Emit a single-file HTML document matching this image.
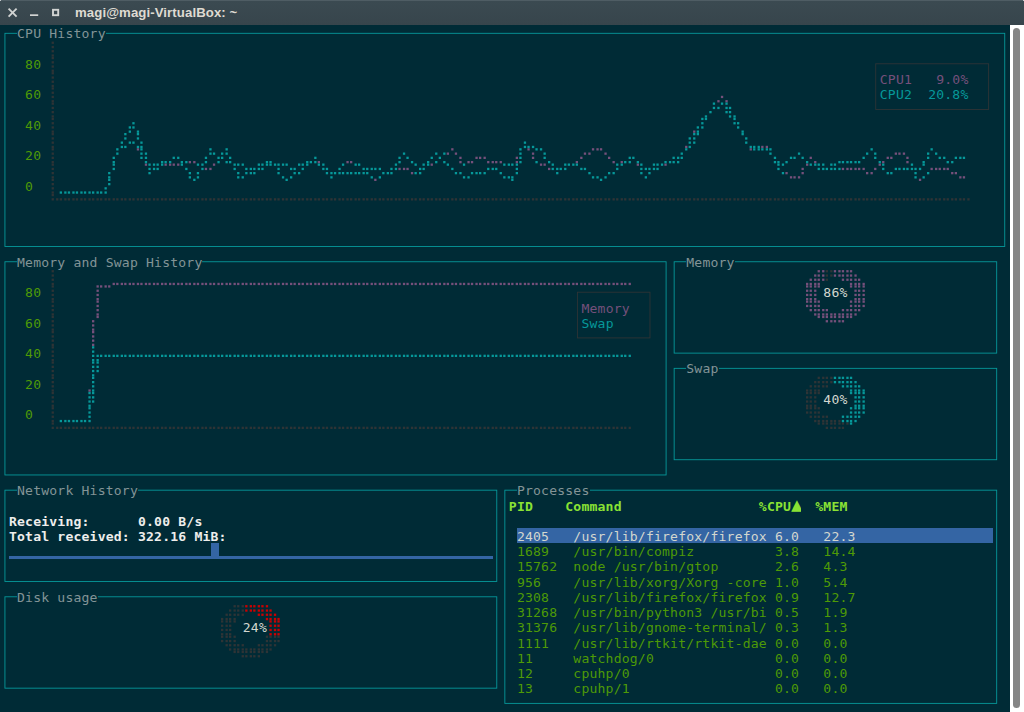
<!DOCTYPE html><html><head><meta charset="utf-8"><title>magi@magi-VirtualBox: ~</title><style>
html,body{margin:0;padding:0}
body{width:1024px;height:712px;overflow:hidden;background:#002b36;position:relative}
.tb{position:absolute;left:0;top:0;width:1024px;height:25px;background:linear-gradient(#3b4a51,#37454c);border-top:1px solid #4f5d64;box-sizing:border-box}
.tt{position:absolute;left:75px;top:3.7px;font:bold 13.2px "Liberation Sans","DejaVu Sans",sans-serif;color:#dfdbd2;white-space:pre;letter-spacing:0.09px}
.sb{position:absolute;left:1010px;top:25px;width:14px;height:687px;background:#fff}
.th{position:absolute;left:3px;top:3px;width:7px;height:680px;border-radius:3.5px;background:#858585}
.t{position:absolute;white-space:pre;font-family:"DejaVu Sans Mono","Liberation Mono",monospace;font-size:13.1px;line-height:15.229px;height:15.229px;letter-spacing:0.18px;color:#839496}
.tl{position:absolute;left:0;top:0;width:1009.0px;height:712.0px}
.b{font-weight:bold}
.l{background:#002b36}
svg{position:absolute;left:0;top:0}
.d rect{width:2.3px;height:2.3px}
</style></head><body>
<div class="tb"><svg width="70" height="25" viewBox="0 0 70 25" style="top:-1px"><g stroke="#d2d4d3" stroke-width="1.9" fill="none"><line x1="8.6" y1="8.6" x2="16.6" y2="16.6"/><line x1="16.6" y1="8.6" x2="8.6" y2="16.6"/><line x1="30" y1="15.15" x2="38.2" y2="15.15" stroke-width="1.7"/><rect x="53" y="9.8" width="5.2" height="5.4"/></g></svg><div class="tt">magi@magi-VirtualBox: ~</div></div>
<div style="position:absolute;left:0;top:0;width:1px;height:1px;background:#c5cacc"></div><div style="position:absolute;left:1023px;top:0;width:1px;height:1px;background:#c5cacc"></div>
<div class="sb"><div class="th"></div></div>
<svg width="1010" height="712" viewBox="0 0 1010 712"><g fill="none" stroke="#06989a" stroke-width="0.9"><rect x="4.93" y="33.31" width="999.81" height="213.21"/><rect x="4.93" y="261.75" width="661.17" height="213.21"/><rect x="674.16" y="261.75" width="322.52" height="91.37"/><rect x="674.16" y="368.35" width="322.52" height="91.37"/><rect x="4.93" y="490.18" width="491.84" height="91.37"/><rect x="4.93" y="596.79" width="491.84" height="91.37"/><rect x="504.84" y="490.18" width="491.84" height="213.21"/><rect x="875.74" y="63.77" width="112.88" height="45.69" stroke="#2e3436"/><rect x="577.40" y="292.21" width="72.57" height="45.69" stroke="#2e3436"/></g></svg>
<div style="position:absolute;left:8.96px;top:556.12px;width:483.78px;height:2.60px;background:#3465a4"></div>
<div style="position:absolute;left:210.54px;top:543.49px;width:8.06px;height:15.23px;background:#3465a4"></div>
<div class="t b" style="left:791.10px;top:495.10px;width:10.00px;height:20px;overflow:hidden;color:#8ae234;font-size:19.5px;line-height:20px;letter-spacing:0">▲</div>
<div style="position:absolute;left:516.93px;top:528.06px;width:475.72px;height:15.23px;background:#3465a4"></div>
<div class="tl"><div class="t l" style="left:17.03px;top:26.40px">CPU History</div>
<div class="t l" style="left:17.03px;top:254.83px">Memory and Swap History</div>
<div class="t l" style="left:686.25px;top:254.83px">Memory</div>
<div class="t l" style="left:686.25px;top:361.44px">Swap</div>
<div class="t l" style="left:17.03px;top:483.27px">Network History</div>
<div class="t l" style="left:17.03px;top:589.87px">Disk usage</div>
<div class="t l" style="left:516.93px;top:483.27px">Processes</div>
<div class="t" style="left:25.09px;top:56.86px;color:#4e9a06">80</div>
<div class="t" style="left:25.09px;top:285.29px;color:#4e9a06">80</div>
<div class="t" style="left:25.09px;top:87.32px;color:#4e9a06">60</div>
<div class="t" style="left:25.09px;top:315.75px;color:#4e9a06">60</div>
<div class="t" style="left:25.09px;top:117.77px;color:#4e9a06">40</div>
<div class="t" style="left:25.09px;top:346.21px;color:#4e9a06">40</div>
<div class="t" style="left:25.09px;top:148.23px;color:#4e9a06">20</div>
<div class="t" style="left:25.09px;top:376.67px;color:#4e9a06">20</div>
<div class="t" style="left:25.09px;top:178.69px;color:#4e9a06">0</div>
<div class="t" style="left:25.09px;top:407.12px;color:#4e9a06">0</div>
<div class="t" style="left:879.77px;top:72.09px;color:#75507b">CPU1   9.0%</div>
<div class="t" style="left:879.77px;top:87.32px;color:#06989a">CPU2  20.8%</div>
<div class="t" style="left:581.44px;top:300.52px;color:#75507b">Memory</div>
<div class="t" style="left:581.44px;top:315.75px;color:#06989a">Swap</div>
<div class="t" style="left:823.33px;top:285.29px;color:#d3d7cf">86%</div>
<div class="t" style="left:823.33px;top:391.90px;color:#d3d7cf">40%</div>
<div class="t" style="left:242.79px;top:620.33px;color:#d3d7cf">24%</div>
<div class="t b" style="left:8.96px;top:513.73px;color:#eeeeec">Receiving:      0.00 B/s</div>
<div class="t b" style="left:8.96px;top:528.96px;color:#eeeeec">Total received: 322.16 MiB:</div>
<div class="t b" style="left:508.87px;top:498.50px;color:#8ae234">PID    Command</div>
<div class="t b" style="left:758.82px;top:498.50px;color:#8ae234">%CPU</div>
<div class="t b" style="left:815.26px;top:498.50px;color:#8ae234">%MEM</div>
<div class="t" style="left:516.93px;top:528.96px;color:#d3d7cf">2405   /usr/lib/firefox/firefox 6.0   22.3</div>
<div class="t" style="left:516.93px;top:544.19px;color:#4e9a06">1689   /usr/bin/compiz          3.8   14.4</div>
<div class="t" style="left:516.93px;top:559.42px;color:#4e9a06">15762  node /usr/bin/gtop       2.6   4.3</div>
<div class="t" style="left:516.93px;top:574.64px;color:#4e9a06">956    /usr/lib/xorg/Xorg -core 1.0   5.4</div>
<div class="t" style="left:516.93px;top:589.87px;color:#4e9a06">2308   /usr/lib/firefox/firefox 0.9   12.7</div>
<div class="t" style="left:516.93px;top:605.10px;color:#4e9a06">31268  /usr/bin/python3 /usr/bi 0.5   1.9</div>
<div class="t" style="left:516.93px;top:620.33px;color:#4e9a06">31376  /usr/lib/gnome-terminal/ 0.3   1.3</div>
<div class="t" style="left:516.93px;top:635.56px;color:#4e9a06">1111   /usr/lib/rtkit/rtkit-dae 0.0   0.0</div>
<div class="t" style="left:516.93px;top:650.79px;color:#4e9a06">11     watchdog/0               0.0   0.0</div>
<div class="t" style="left:516.93px;top:666.02px;color:#4e9a06">12     cpuhp/0                  0.0   0.0</div>
<div class="t" style="left:516.93px;top:681.25px;color:#4e9a06">13     cpuhp/1                  0.0   0.0</div></div>
<svg class="d" width="1009" height="712" viewBox="0 0 1009 712">
<g fill="#2e3436">
<rect x="51.6" y="41.6"/><rect x="51.6" y="45.9"/><rect x="51.6" y="50.1"/><rect x="51.6" y="54.4"/><rect x="51.6" y="56.9"/><rect x="51.6" y="61.2"/><rect x="51.6" y="65.4"/><rect x="51.6" y="69.6"/><rect x="51.6" y="72.1"/><rect x="51.6" y="76.4"/><rect x="51.6" y="80.6"/><rect x="51.6" y="84.8"/><rect x="51.6" y="87.3"/><rect x="51.6" y="91.6"/><rect x="51.6" y="95.8"/><rect x="51.6" y="100.1"/><rect x="51.6" y="102.5"/><rect x="51.6" y="106.8"/><rect x="51.6" y="111.0"/><rect x="51.6" y="115.3"/><rect x="51.6" y="117.8"/><rect x="51.6" y="122.1"/><rect x="51.6" y="126.3"/><rect x="51.6" y="130.5"/><rect x="51.6" y="133.0"/><rect x="51.6" y="137.3"/><rect x="51.6" y="141.5"/><rect x="51.6" y="145.8"/><rect x="51.6" y="148.2"/><rect x="51.6" y="152.5"/><rect x="51.6" y="156.7"/><rect x="51.6" y="161.0"/><rect x="51.6" y="163.5"/><rect x="51.6" y="167.8"/><rect x="51.6" y="172.0"/><rect x="51.6" y="176.2"/><rect x="51.6" y="178.7"/><rect x="51.6" y="183.0"/><rect x="51.6" y="187.2"/><rect x="51.6" y="191.4"/><rect x="51.6" y="193.9"/><rect x="51.6" y="198.2"/><rect x="56.1" y="198.2"/><rect x="59.7" y="198.2"/><rect x="64.2" y="198.2"/><rect x="67.8" y="198.2"/><rect x="72.3" y="198.2"/><rect x="75.8" y="198.2"/><rect x="80.3" y="198.2"/><rect x="83.9" y="198.2"/><rect x="88.4" y="198.2"/><rect x="92.0" y="198.2"/><rect x="96.5" y="198.2"/><rect x="100.0" y="198.2"/><rect x="104.5" y="198.2"/><rect x="108.1" y="198.2"/><rect x="112.6" y="198.2"/><rect x="116.2" y="198.2"/><rect x="120.7" y="198.2"/><rect x="124.2" y="198.2"/><rect x="128.7" y="198.2"/><rect x="132.3" y="198.2"/><rect x="136.8" y="198.2"/><rect x="140.3" y="198.2"/><rect x="144.8" y="198.2"/><rect x="148.4" y="198.2"/><rect x="152.9" y="198.2"/><rect x="156.5" y="198.2"/><rect x="161.0" y="198.2"/><rect x="164.5" y="198.2"/><rect x="169.0" y="198.2"/><rect x="172.6" y="198.2"/><rect x="177.1" y="198.2"/><rect x="180.7" y="198.2"/><rect x="185.2" y="198.2"/><rect x="188.7" y="198.2"/><rect x="193.2" y="198.2"/><rect x="196.8" y="198.2"/><rect x="201.3" y="198.2"/><rect x="204.8" y="198.2"/><rect x="209.3" y="198.2"/><rect x="212.9" y="198.2"/><rect x="217.4" y="198.2"/><rect x="221.0" y="198.2"/><rect x="225.5" y="198.2"/><rect x="229.0" y="198.2"/><rect x="233.5" y="198.2"/><rect x="237.1" y="198.2"/><rect x="241.6" y="198.2"/><rect x="245.2" y="198.2"/><rect x="249.7" y="198.2"/><rect x="253.2" y="198.2"/><rect x="257.7" y="198.2"/><rect x="261.3" y="198.2"/><rect x="265.8" y="198.2"/><rect x="269.4" y="198.2"/><rect x="273.9" y="198.2"/><rect x="277.4" y="198.2"/><rect x="281.9" y="198.2"/><rect x="285.5" y="198.2"/><rect x="290.0" y="198.2"/><rect x="293.5" y="198.2"/><rect x="298.0" y="198.2"/><rect x="301.6" y="198.2"/><rect x="306.1" y="198.2"/><rect x="309.7" y="198.2"/><rect x="314.2" y="198.2"/><rect x="317.7" y="198.2"/><rect x="322.2" y="198.2"/><rect x="325.8" y="198.2"/><rect x="330.3" y="198.2"/><rect x="333.9" y="198.2"/><rect x="338.4" y="198.2"/><rect x="341.9" y="198.2"/><rect x="346.4" y="198.2"/><rect x="350.0" y="198.2"/><rect x="354.5" y="198.2"/><rect x="358.0" y="198.2"/><rect x="362.5" y="198.2"/><rect x="366.1" y="198.2"/><rect x="370.6" y="198.2"/><rect x="374.2" y="198.2"/><rect x="378.7" y="198.2"/><rect x="382.2" y="198.2"/><rect x="386.7" y="198.2"/><rect x="390.3" y="198.2"/><rect x="394.8" y="198.2"/><rect x="398.4" y="198.2"/><rect x="402.9" y="198.2"/><rect x="406.4" y="198.2"/><rect x="410.9" y="198.2"/><rect x="414.5" y="198.2"/><rect x="419.0" y="198.2"/><rect x="422.5" y="198.2"/><rect x="427.0" y="198.2"/><rect x="430.6" y="198.2"/><rect x="435.1" y="198.2"/><rect x="438.7" y="198.2"/><rect x="443.2" y="198.2"/><rect x="446.7" y="198.2"/><rect x="451.2" y="198.2"/><rect x="454.8" y="198.2"/><rect x="459.3" y="198.2"/><rect x="462.9" y="198.2"/><rect x="467.4" y="198.2"/><rect x="470.9" y="198.2"/><rect x="475.4" y="198.2"/><rect x="479.0" y="198.2"/><rect x="483.5" y="198.2"/><rect x="487.1" y="198.2"/><rect x="491.6" y="198.2"/><rect x="495.1" y="198.2"/><rect x="499.6" y="198.2"/><rect x="503.2" y="198.2"/><rect x="507.7" y="198.2"/><rect x="511.2" y="198.2"/><rect x="515.7" y="198.2"/><rect x="519.3" y="198.2"/><rect x="523.8" y="198.2"/><rect x="527.4" y="198.2"/><rect x="531.9" y="198.2"/><rect x="535.4" y="198.2"/><rect x="539.9" y="198.2"/><rect x="543.5" y="198.2"/><rect x="548.0" y="198.2"/><rect x="551.6" y="198.2"/><rect x="556.1" y="198.2"/><rect x="559.6" y="198.2"/><rect x="564.1" y="198.2"/><rect x="567.7" y="198.2"/><rect x="572.2" y="198.2"/><rect x="575.7" y="198.2"/><rect x="580.2" y="198.2"/><rect x="583.8" y="198.2"/><rect x="588.3" y="198.2"/><rect x="591.9" y="198.2"/><rect x="596.4" y="198.2"/><rect x="599.9" y="198.2"/><rect x="604.4" y="198.2"/><rect x="608.0" y="198.2"/><rect x="612.5" y="198.2"/><rect x="616.1" y="198.2"/><rect x="620.6" y="198.2"/><rect x="624.1" y="198.2"/><rect x="628.6" y="198.2"/><rect x="632.2" y="198.2"/><rect x="636.7" y="198.2"/><rect x="640.2" y="198.2"/><rect x="644.7" y="198.2"/><rect x="648.3" y="198.2"/><rect x="652.8" y="198.2"/><rect x="656.4" y="198.2"/><rect x="660.9" y="198.2"/><rect x="664.4" y="198.2"/><rect x="668.9" y="198.2"/><rect x="672.5" y="198.2"/><rect x="677.0" y="198.2"/><rect x="680.6" y="198.2"/><rect x="685.1" y="198.2"/><rect x="688.6" y="198.2"/><rect x="693.1" y="198.2"/><rect x="696.7" y="198.2"/><rect x="701.2" y="198.2"/><rect x="704.8" y="198.2"/><rect x="709.3" y="198.2"/><rect x="712.8" y="198.2"/><rect x="717.3" y="198.2"/><rect x="720.9" y="198.2"/><rect x="725.4" y="198.2"/><rect x="728.9" y="198.2"/><rect x="733.4" y="198.2"/><rect x="737.0" y="198.2"/><rect x="741.5" y="198.2"/><rect x="745.1" y="198.2"/><rect x="749.6" y="198.2"/><rect x="753.1" y="198.2"/><rect x="757.6" y="198.2"/><rect x="761.2" y="198.2"/><rect x="765.7" y="198.2"/><rect x="769.3" y="198.2"/><rect x="773.8" y="198.2"/><rect x="777.3" y="198.2"/><rect x="781.8" y="198.2"/><rect x="785.4" y="198.2"/><rect x="789.9" y="198.2"/><rect x="793.4" y="198.2"/><rect x="797.9" y="198.2"/><rect x="801.5" y="198.2"/><rect x="806.0" y="198.2"/><rect x="809.6" y="198.2"/><rect x="814.1" y="198.2"/><rect x="817.6" y="198.2"/><rect x="822.1" y="198.2"/><rect x="825.7" y="198.2"/><rect x="830.2" y="198.2"/><rect x="833.8" y="198.2"/><rect x="838.3" y="198.2"/><rect x="841.8" y="198.2"/><rect x="846.3" y="198.2"/><rect x="849.9" y="198.2"/><rect x="854.4" y="198.2"/><rect x="858.0" y="198.2"/><rect x="862.5" y="198.2"/><rect x="866.0" y="198.2"/><rect x="870.5" y="198.2"/><rect x="874.1" y="198.2"/><rect x="878.6" y="198.2"/><rect x="882.1" y="198.2"/><rect x="886.6" y="198.2"/><rect x="890.2" y="198.2"/><rect x="894.7" y="198.2"/><rect x="898.3" y="198.2"/><rect x="902.8" y="198.2"/><rect x="906.3" y="198.2"/><rect x="910.8" y="198.2"/><rect x="914.4" y="198.2"/><rect x="918.9" y="198.2"/><rect x="922.5" y="198.2"/><rect x="927.0" y="198.2"/><rect x="930.5" y="198.2"/><rect x="935.0" y="198.2"/><rect x="938.6" y="198.2"/><rect x="943.1" y="198.2"/><rect x="946.6" y="198.2"/><rect x="951.1" y="198.2"/><rect x="954.7" y="198.2"/><rect x="959.2" y="198.2"/><rect x="962.8" y="198.2"/><rect x="967.3" y="198.2"/><rect x="51.6" y="270.1"/><rect x="51.6" y="274.4"/><rect x="51.6" y="278.6"/><rect x="51.6" y="282.8"/><rect x="51.6" y="285.3"/><rect x="51.6" y="289.6"/><rect x="51.6" y="293.8"/><rect x="51.6" y="298.0"/><rect x="51.6" y="300.5"/><rect x="51.6" y="304.8"/><rect x="51.6" y="309.0"/><rect x="51.6" y="313.3"/><rect x="51.6" y="315.8"/><rect x="51.6" y="320.1"/><rect x="51.6" y="324.3"/><rect x="51.6" y="328.5"/><rect x="51.6" y="331.0"/><rect x="51.6" y="335.3"/><rect x="51.6" y="339.5"/><rect x="51.6" y="343.7"/><rect x="51.6" y="346.2"/><rect x="51.6" y="350.5"/><rect x="51.6" y="354.7"/><rect x="51.6" y="359.0"/><rect x="51.6" y="361.4"/><rect x="51.6" y="365.7"/><rect x="51.6" y="369.9"/><rect x="51.6" y="374.2"/><rect x="51.6" y="376.7"/><rect x="51.6" y="381.0"/><rect x="51.6" y="385.2"/><rect x="51.6" y="389.4"/><rect x="51.6" y="391.9"/><rect x="51.6" y="396.2"/><rect x="51.6" y="400.4"/><rect x="51.6" y="404.6"/><rect x="51.6" y="407.1"/><rect x="51.6" y="411.4"/><rect x="51.6" y="415.6"/><rect x="51.6" y="419.9"/><rect x="51.6" y="422.4"/><rect x="51.6" y="426.7"/><rect x="56.1" y="426.7"/><rect x="59.7" y="426.7"/><rect x="64.2" y="426.7"/><rect x="67.8" y="426.7"/><rect x="72.3" y="426.7"/><rect x="75.8" y="426.7"/><rect x="80.3" y="426.7"/><rect x="83.9" y="426.7"/><rect x="88.4" y="426.7"/><rect x="92.0" y="426.7"/><rect x="96.5" y="426.7"/><rect x="100.0" y="426.7"/><rect x="104.5" y="426.7"/><rect x="108.1" y="426.7"/><rect x="112.6" y="426.7"/><rect x="116.2" y="426.7"/><rect x="120.7" y="426.7"/><rect x="124.2" y="426.7"/><rect x="128.7" y="426.7"/><rect x="132.3" y="426.7"/><rect x="136.8" y="426.7"/><rect x="140.3" y="426.7"/><rect x="144.8" y="426.7"/><rect x="148.4" y="426.7"/><rect x="152.9" y="426.7"/><rect x="156.5" y="426.7"/><rect x="161.0" y="426.7"/><rect x="164.5" y="426.7"/><rect x="169.0" y="426.7"/><rect x="172.6" y="426.7"/><rect x="177.1" y="426.7"/><rect x="180.7" y="426.7"/><rect x="185.2" y="426.7"/><rect x="188.7" y="426.7"/><rect x="193.2" y="426.7"/><rect x="196.8" y="426.7"/><rect x="201.3" y="426.7"/><rect x="204.8" y="426.7"/><rect x="209.3" y="426.7"/><rect x="212.9" y="426.7"/><rect x="217.4" y="426.7"/><rect x="221.0" y="426.7"/><rect x="225.5" y="426.7"/><rect x="229.0" y="426.7"/><rect x="233.5" y="426.7"/><rect x="237.1" y="426.7"/><rect x="241.6" y="426.7"/><rect x="245.2" y="426.7"/><rect x="249.7" y="426.7"/><rect x="253.2" y="426.7"/><rect x="257.7" y="426.7"/><rect x="261.3" y="426.7"/><rect x="265.8" y="426.7"/><rect x="269.4" y="426.7"/><rect x="273.9" y="426.7"/><rect x="277.4" y="426.7"/><rect x="281.9" y="426.7"/><rect x="285.5" y="426.7"/><rect x="290.0" y="426.7"/><rect x="293.5" y="426.7"/><rect x="298.0" y="426.7"/><rect x="301.6" y="426.7"/><rect x="306.1" y="426.7"/><rect x="309.7" y="426.7"/><rect x="314.2" y="426.7"/><rect x="317.7" y="426.7"/><rect x="322.2" y="426.7"/><rect x="325.8" y="426.7"/><rect x="330.3" y="426.7"/><rect x="333.9" y="426.7"/><rect x="338.4" y="426.7"/><rect x="341.9" y="426.7"/><rect x="346.4" y="426.7"/><rect x="350.0" y="426.7"/><rect x="354.5" y="426.7"/><rect x="358.0" y="426.7"/><rect x="362.5" y="426.7"/><rect x="366.1" y="426.7"/><rect x="370.6" y="426.7"/><rect x="374.2" y="426.7"/><rect x="378.7" y="426.7"/><rect x="382.2" y="426.7"/><rect x="386.7" y="426.7"/><rect x="390.3" y="426.7"/><rect x="394.8" y="426.7"/><rect x="398.4" y="426.7"/><rect x="402.9" y="426.7"/><rect x="406.4" y="426.7"/><rect x="410.9" y="426.7"/><rect x="414.5" y="426.7"/><rect x="419.0" y="426.7"/><rect x="422.5" y="426.7"/><rect x="427.0" y="426.7"/><rect x="430.6" y="426.7"/><rect x="435.1" y="426.7"/><rect x="438.7" y="426.7"/><rect x="443.2" y="426.7"/><rect x="446.7" y="426.7"/><rect x="451.2" y="426.7"/><rect x="454.8" y="426.7"/><rect x="459.3" y="426.7"/><rect x="462.9" y="426.7"/><rect x="467.4" y="426.7"/><rect x="470.9" y="426.7"/><rect x="475.4" y="426.7"/><rect x="479.0" y="426.7"/><rect x="483.5" y="426.7"/><rect x="487.1" y="426.7"/><rect x="491.6" y="426.7"/><rect x="495.1" y="426.7"/><rect x="499.6" y="426.7"/><rect x="503.2" y="426.7"/><rect x="507.7" y="426.7"/><rect x="511.2" y="426.7"/><rect x="515.7" y="426.7"/><rect x="519.3" y="426.7"/><rect x="523.8" y="426.7"/><rect x="527.4" y="426.7"/><rect x="531.9" y="426.7"/><rect x="535.4" y="426.7"/><rect x="539.9" y="426.7"/><rect x="543.5" y="426.7"/><rect x="548.0" y="426.7"/><rect x="551.6" y="426.7"/><rect x="556.1" y="426.7"/><rect x="559.6" y="426.7"/><rect x="564.1" y="426.7"/><rect x="567.7" y="426.7"/><rect x="572.2" y="426.7"/><rect x="575.7" y="426.7"/><rect x="580.2" y="426.7"/><rect x="583.8" y="426.7"/><rect x="588.3" y="426.7"/><rect x="591.9" y="426.7"/><rect x="596.4" y="426.7"/><rect x="599.9" y="426.7"/><rect x="604.4" y="426.7"/><rect x="608.0" y="426.7"/><rect x="612.5" y="426.7"/><rect x="616.1" y="426.7"/><rect x="620.6" y="426.7"/><rect x="624.1" y="426.7"/><rect x="628.6" y="426.7"/><rect x="825.7" y="270.1"/><rect x="830.2" y="270.1"/><rect x="825.7" y="274.4"/><rect x="830.2" y="274.4"/><rect x="825.7" y="278.6"/><rect x="817.6" y="376.7"/><rect x="822.1" y="376.7"/><rect x="825.7" y="376.7"/><rect x="830.2" y="376.7"/><rect x="814.1" y="381.0"/><rect x="817.6" y="381.0"/><rect x="822.1" y="381.0"/><rect x="825.7" y="381.0"/><rect x="830.2" y="381.0"/><rect x="809.6" y="385.2"/><rect x="814.1" y="385.2"/><rect x="817.6" y="385.2"/><rect x="822.1" y="385.2"/><rect x="825.7" y="385.2"/><rect x="806.0" y="389.4"/><rect x="809.6" y="389.4"/><rect x="814.1" y="389.4"/><rect x="817.6" y="389.4"/><rect x="806.0" y="391.9"/><rect x="809.6" y="391.9"/><rect x="814.1" y="391.9"/><rect x="817.6" y="391.9"/><rect x="806.0" y="396.2"/><rect x="809.6" y="396.2"/><rect x="814.1" y="396.2"/><rect x="806.0" y="400.4"/><rect x="809.6" y="400.4"/><rect x="814.1" y="400.4"/><rect x="806.0" y="404.6"/><rect x="809.6" y="404.6"/><rect x="814.1" y="404.6"/><rect x="806.0" y="407.1"/><rect x="809.6" y="407.1"/><rect x="814.1" y="407.1"/><rect x="817.6" y="407.1"/><rect x="806.0" y="411.4"/><rect x="809.6" y="411.4"/><rect x="814.1" y="411.4"/><rect x="817.6" y="411.4"/><rect x="809.6" y="415.6"/><rect x="814.1" y="415.6"/><rect x="817.6" y="415.6"/><rect x="822.1" y="415.6"/><rect x="825.7" y="415.6"/><rect x="814.1" y="419.9"/><rect x="817.6" y="419.9"/><rect x="822.1" y="419.9"/><rect x="825.7" y="419.9"/><rect x="830.2" y="419.9"/><rect x="833.8" y="419.9"/><rect x="838.3" y="419.9"/><rect x="817.6" y="422.4"/><rect x="822.1" y="422.4"/><rect x="825.7" y="422.4"/><rect x="830.2" y="422.4"/><rect x="833.8" y="422.4"/><rect x="838.3" y="422.4"/><rect x="841.8" y="422.4"/><rect x="846.3" y="422.4"/><rect x="825.7" y="426.7"/><rect x="830.2" y="426.7"/><rect x="833.8" y="426.7"/><rect x="838.3" y="426.7"/><rect x="841.8" y="426.7"/><rect x="233.5" y="605.1"/><rect x="237.1" y="605.1"/><rect x="241.6" y="605.1"/><rect x="229.0" y="609.4"/><rect x="233.5" y="609.4"/><rect x="237.1" y="609.4"/><rect x="241.6" y="609.4"/><rect x="225.5" y="613.6"/><rect x="229.0" y="613.6"/><rect x="233.5" y="613.6"/><rect x="237.1" y="613.6"/><rect x="241.6" y="613.6"/><rect x="221.0" y="617.9"/><rect x="225.5" y="617.9"/><rect x="229.0" y="617.9"/><rect x="233.5" y="617.9"/><rect x="221.0" y="620.3"/><rect x="225.5" y="620.3"/><rect x="229.0" y="620.3"/><rect x="233.5" y="620.3"/><rect x="221.0" y="624.6"/><rect x="225.5" y="624.6"/><rect x="229.0" y="624.6"/><rect x="221.0" y="628.8"/><rect x="225.5" y="628.8"/><rect x="229.0" y="628.8"/><rect x="221.0" y="633.1"/><rect x="225.5" y="633.1"/><rect x="229.0" y="633.1"/><rect x="221.0" y="635.6"/><rect x="225.5" y="635.6"/><rect x="229.0" y="635.6"/><rect x="233.5" y="635.6"/><rect x="265.8" y="635.6"/><rect x="269.4" y="635.6"/><rect x="273.9" y="635.6"/><rect x="277.4" y="635.6"/><rect x="221.0" y="639.9"/><rect x="225.5" y="639.9"/><rect x="229.0" y="639.9"/><rect x="233.5" y="639.9"/><rect x="265.8" y="639.9"/><rect x="269.4" y="639.9"/><rect x="273.9" y="639.9"/><rect x="277.4" y="639.9"/><rect x="225.5" y="644.1"/><rect x="229.0" y="644.1"/><rect x="233.5" y="644.1"/><rect x="237.1" y="644.1"/><rect x="241.6" y="644.1"/><rect x="257.7" y="644.1"/><rect x="261.3" y="644.1"/><rect x="265.8" y="644.1"/><rect x="269.4" y="644.1"/><rect x="273.9" y="644.1"/><rect x="229.0" y="648.3"/><rect x="233.5" y="648.3"/><rect x="237.1" y="648.3"/><rect x="241.6" y="648.3"/><rect x="245.2" y="648.3"/><rect x="249.7" y="648.3"/><rect x="253.2" y="648.3"/><rect x="257.7" y="648.3"/><rect x="261.3" y="648.3"/><rect x="265.8" y="648.3"/><rect x="269.4" y="648.3"/><rect x="233.5" y="650.8"/><rect x="237.1" y="650.8"/><rect x="241.6" y="650.8"/><rect x="245.2" y="650.8"/><rect x="249.7" y="650.8"/><rect x="253.2" y="650.8"/><rect x="257.7" y="650.8"/><rect x="261.3" y="650.8"/><rect x="265.8" y="650.8"/><rect x="241.6" y="655.1"/><rect x="245.2" y="655.1"/><rect x="249.7" y="655.1"/><rect x="253.2" y="655.1"/><rect x="257.7" y="655.1"/>
</g>
<g fill="#75507b">
<rect x="136.8" y="148.2"/><rect x="144.8" y="163.5"/><rect x="164.5" y="163.5"/><rect x="169.0" y="163.5"/><rect x="172.6" y="163.5"/><rect x="177.1" y="163.5"/><rect x="188.7" y="161.0"/><rect x="193.2" y="161.0"/><rect x="204.8" y="167.8"/><rect x="209.3" y="167.8"/><rect x="212.9" y="163.5"/><rect x="317.7" y="161.0"/><rect x="346.4" y="161.0"/><rect x="350.0" y="161.0"/><rect x="374.2" y="178.7"/><rect x="398.4" y="167.8"/><rect x="402.9" y="167.8"/><rect x="406.4" y="167.8"/><rect x="410.9" y="172.0"/><rect x="430.6" y="163.5"/><rect x="446.7" y="152.5"/><rect x="451.2" y="148.2"/><rect x="454.8" y="152.5"/><rect x="459.3" y="156.7"/><rect x="459.3" y="161.0"/><rect x="467.4" y="161.0"/><rect x="470.9" y="161.0"/><rect x="475.4" y="156.7"/><rect x="479.0" y="156.7"/><rect x="483.5" y="156.7"/><rect x="487.1" y="161.0"/><rect x="491.6" y="161.0"/><rect x="495.1" y="161.0"/><rect x="499.6" y="161.0"/><rect x="515.7" y="156.7"/><rect x="515.7" y="161.0"/><rect x="527.4" y="148.2"/><rect x="531.9" y="152.5"/><rect x="531.9" y="156.7"/><rect x="539.9" y="163.5"/><rect x="543.5" y="163.5"/><rect x="548.0" y="167.8"/><rect x="575.7" y="161.0"/><rect x="580.2" y="156.7"/><rect x="583.8" y="152.5"/><rect x="588.3" y="152.5"/><rect x="591.9" y="148.2"/><rect x="596.4" y="148.2"/><rect x="599.9" y="148.2"/><rect x="604.4" y="152.5"/><rect x="608.0" y="156.7"/><rect x="612.5" y="161.0"/><rect x="620.6" y="161.0"/><rect x="636.7" y="163.5"/><rect x="664.4" y="163.5"/><rect x="685.1" y="145.8"/><rect x="693.1" y="130.5"/><rect x="717.3" y="100.1"/><rect x="720.9" y="95.8"/><rect x="725.4" y="100.1"/><rect x="749.6" y="148.2"/><rect x="761.2" y="145.8"/><rect x="765.7" y="145.8"/><rect x="785.4" y="172.0"/><rect x="789.9" y="176.2"/><rect x="793.4" y="176.2"/><rect x="797.9" y="176.2"/><rect x="801.5" y="167.8"/><rect x="801.5" y="172.0"/><rect x="806.0" y="163.5"/><rect x="809.6" y="156.7"/><rect x="814.1" y="161.0"/><rect x="841.8" y="167.8"/><rect x="846.3" y="167.8"/><rect x="849.9" y="167.8"/><rect x="854.4" y="167.8"/><rect x="858.0" y="167.8"/><rect x="862.5" y="167.8"/><rect x="866.0" y="172.0"/><rect x="870.5" y="172.0"/><rect x="874.1" y="167.8"/><rect x="878.6" y="163.5"/><rect x="882.1" y="161.0"/><rect x="886.6" y="156.7"/><rect x="890.2" y="156.7"/><rect x="894.7" y="152.5"/><rect x="898.3" y="152.5"/><rect x="902.8" y="152.5"/><rect x="906.3" y="156.7"/><rect x="906.3" y="161.0"/><rect x="918.9" y="178.7"/><rect x="930.5" y="167.8"/><rect x="935.0" y="167.8"/><rect x="938.6" y="167.8"/><rect x="943.1" y="167.8"/><rect x="946.6" y="167.8"/><rect x="951.1" y="172.0"/><rect x="954.7" y="172.0"/><rect x="959.2" y="176.2"/><rect x="962.8" y="176.2"/><rect x="88.4" y="389.4"/><rect x="92.0" y="320.1"/><rect x="92.0" y="324.3"/><rect x="92.0" y="328.5"/><rect x="92.0" y="331.0"/><rect x="92.0" y="335.3"/><rect x="92.0" y="339.5"/><rect x="92.0" y="343.7"/><rect x="96.5" y="285.3"/><rect x="96.5" y="289.6"/><rect x="96.5" y="293.8"/><rect x="96.5" y="298.0"/><rect x="96.5" y="300.5"/><rect x="96.5" y="304.8"/><rect x="96.5" y="309.0"/><rect x="96.5" y="313.3"/><rect x="96.5" y="315.8"/><rect x="100.0" y="285.3"/><rect x="104.5" y="285.3"/><rect x="108.1" y="285.3"/><rect x="112.6" y="282.8"/><rect x="116.2" y="282.8"/><rect x="120.7" y="282.8"/><rect x="124.2" y="282.8"/><rect x="128.7" y="282.8"/><rect x="132.3" y="282.8"/><rect x="136.8" y="282.8"/><rect x="140.3" y="282.8"/><rect x="144.8" y="282.8"/><rect x="148.4" y="282.8"/><rect x="152.9" y="282.8"/><rect x="156.5" y="282.8"/><rect x="161.0" y="282.8"/><rect x="164.5" y="282.8"/><rect x="169.0" y="282.8"/><rect x="172.6" y="282.8"/><rect x="177.1" y="282.8"/><rect x="180.7" y="282.8"/><rect x="185.2" y="282.8"/><rect x="188.7" y="282.8"/><rect x="193.2" y="282.8"/><rect x="196.8" y="282.8"/><rect x="201.3" y="282.8"/><rect x="204.8" y="282.8"/><rect x="209.3" y="282.8"/><rect x="212.9" y="282.8"/><rect x="217.4" y="282.8"/><rect x="221.0" y="282.8"/><rect x="225.5" y="282.8"/><rect x="229.0" y="282.8"/><rect x="233.5" y="282.8"/><rect x="237.1" y="282.8"/><rect x="241.6" y="282.8"/><rect x="245.2" y="282.8"/><rect x="249.7" y="282.8"/><rect x="253.2" y="282.8"/><rect x="257.7" y="282.8"/><rect x="261.3" y="282.8"/><rect x="265.8" y="282.8"/><rect x="269.4" y="282.8"/><rect x="273.9" y="282.8"/><rect x="277.4" y="282.8"/><rect x="281.9" y="282.8"/><rect x="285.5" y="282.8"/><rect x="290.0" y="282.8"/><rect x="293.5" y="282.8"/><rect x="298.0" y="282.8"/><rect x="301.6" y="282.8"/><rect x="306.1" y="282.8"/><rect x="309.7" y="282.8"/><rect x="314.2" y="282.8"/><rect x="317.7" y="282.8"/><rect x="322.2" y="282.8"/><rect x="325.8" y="282.8"/><rect x="330.3" y="282.8"/><rect x="333.9" y="282.8"/><rect x="338.4" y="282.8"/><rect x="341.9" y="282.8"/><rect x="346.4" y="282.8"/><rect x="350.0" y="282.8"/><rect x="354.5" y="282.8"/><rect x="358.0" y="282.8"/><rect x="362.5" y="282.8"/><rect x="366.1" y="282.8"/><rect x="370.6" y="282.8"/><rect x="374.2" y="282.8"/><rect x="378.7" y="282.8"/><rect x="382.2" y="282.8"/><rect x="386.7" y="282.8"/><rect x="390.3" y="282.8"/><rect x="394.8" y="282.8"/><rect x="398.4" y="282.8"/><rect x="402.9" y="282.8"/><rect x="406.4" y="282.8"/><rect x="410.9" y="282.8"/><rect x="414.5" y="282.8"/><rect x="419.0" y="282.8"/><rect x="422.5" y="282.8"/><rect x="427.0" y="282.8"/><rect x="430.6" y="282.8"/><rect x="435.1" y="282.8"/><rect x="438.7" y="282.8"/><rect x="443.2" y="282.8"/><rect x="446.7" y="282.8"/><rect x="451.2" y="282.8"/><rect x="454.8" y="282.8"/><rect x="459.3" y="282.8"/><rect x="462.9" y="282.8"/><rect x="467.4" y="282.8"/><rect x="470.9" y="282.8"/><rect x="475.4" y="282.8"/><rect x="479.0" y="282.8"/><rect x="483.5" y="282.8"/><rect x="487.1" y="282.8"/><rect x="491.6" y="282.8"/><rect x="495.1" y="282.8"/><rect x="499.6" y="282.8"/><rect x="503.2" y="282.8"/><rect x="507.7" y="282.8"/><rect x="511.2" y="282.8"/><rect x="515.7" y="282.8"/><rect x="519.3" y="282.8"/><rect x="523.8" y="282.8"/><rect x="527.4" y="282.8"/><rect x="531.9" y="282.8"/><rect x="535.4" y="282.8"/><rect x="539.9" y="282.8"/><rect x="543.5" y="282.8"/><rect x="548.0" y="282.8"/><rect x="551.6" y="282.8"/><rect x="556.1" y="282.8"/><rect x="559.6" y="282.8"/><rect x="564.1" y="282.8"/><rect x="567.7" y="282.8"/><rect x="572.2" y="282.8"/><rect x="575.7" y="282.8"/><rect x="580.2" y="282.8"/><rect x="583.8" y="282.8"/><rect x="588.3" y="282.8"/><rect x="591.9" y="282.8"/><rect x="596.4" y="282.8"/><rect x="599.9" y="282.8"/><rect x="604.4" y="282.8"/><rect x="608.0" y="282.8"/><rect x="612.5" y="282.8"/><rect x="616.1" y="282.8"/><rect x="620.6" y="282.8"/><rect x="624.1" y="282.8"/><rect x="628.6" y="282.8"/><rect x="817.6" y="270.1"/><rect x="822.1" y="270.1"/><rect x="833.8" y="270.1"/><rect x="838.3" y="270.1"/><rect x="841.8" y="270.1"/><rect x="846.3" y="270.1"/><rect x="849.9" y="270.1"/><rect x="814.1" y="274.4"/><rect x="817.6" y="274.4"/><rect x="822.1" y="274.4"/><rect x="833.8" y="274.4"/><rect x="838.3" y="274.4"/><rect x="841.8" y="274.4"/><rect x="846.3" y="274.4"/><rect x="849.9" y="274.4"/><rect x="854.4" y="274.4"/><rect x="809.6" y="278.6"/><rect x="814.1" y="278.6"/><rect x="817.6" y="278.6"/><rect x="822.1" y="278.6"/><rect x="841.8" y="278.6"/><rect x="846.3" y="278.6"/><rect x="849.9" y="278.6"/><rect x="854.4" y="278.6"/><rect x="858.0" y="278.6"/><rect x="806.0" y="282.8"/><rect x="809.6" y="282.8"/><rect x="814.1" y="282.8"/><rect x="817.6" y="282.8"/><rect x="849.9" y="282.8"/><rect x="854.4" y="282.8"/><rect x="858.0" y="282.8"/><rect x="862.5" y="282.8"/><rect x="806.0" y="285.3"/><rect x="809.6" y="285.3"/><rect x="814.1" y="285.3"/><rect x="817.6" y="285.3"/><rect x="849.9" y="285.3"/><rect x="854.4" y="285.3"/><rect x="858.0" y="285.3"/><rect x="862.5" y="285.3"/><rect x="806.0" y="289.6"/><rect x="809.6" y="289.6"/><rect x="814.1" y="289.6"/><rect x="854.4" y="289.6"/><rect x="858.0" y="289.6"/><rect x="862.5" y="289.6"/><rect x="806.0" y="293.8"/><rect x="809.6" y="293.8"/><rect x="814.1" y="293.8"/><rect x="854.4" y="293.8"/><rect x="858.0" y="293.8"/><rect x="862.5" y="293.8"/><rect x="806.0" y="298.0"/><rect x="809.6" y="298.0"/><rect x="814.1" y="298.0"/><rect x="854.4" y="298.0"/><rect x="858.0" y="298.0"/><rect x="862.5" y="298.0"/><rect x="806.0" y="300.5"/><rect x="809.6" y="300.5"/><rect x="814.1" y="300.5"/><rect x="817.6" y="300.5"/><rect x="849.9" y="300.5"/><rect x="854.4" y="300.5"/><rect x="858.0" y="300.5"/><rect x="862.5" y="300.5"/><rect x="806.0" y="304.8"/><rect x="809.6" y="304.8"/><rect x="814.1" y="304.8"/><rect x="817.6" y="304.8"/><rect x="849.9" y="304.8"/><rect x="854.4" y="304.8"/><rect x="858.0" y="304.8"/><rect x="862.5" y="304.8"/><rect x="809.6" y="309.0"/><rect x="814.1" y="309.0"/><rect x="817.6" y="309.0"/><rect x="822.1" y="309.0"/><rect x="825.7" y="309.0"/><rect x="841.8" y="309.0"/><rect x="846.3" y="309.0"/><rect x="849.9" y="309.0"/><rect x="854.4" y="309.0"/><rect x="858.0" y="309.0"/><rect x="814.1" y="313.3"/><rect x="817.6" y="313.3"/><rect x="822.1" y="313.3"/><rect x="825.7" y="313.3"/><rect x="830.2" y="313.3"/><rect x="833.8" y="313.3"/><rect x="838.3" y="313.3"/><rect x="841.8" y="313.3"/><rect x="846.3" y="313.3"/><rect x="849.9" y="313.3"/><rect x="854.4" y="313.3"/><rect x="817.6" y="315.8"/><rect x="822.1" y="315.8"/><rect x="825.7" y="315.8"/><rect x="830.2" y="315.8"/><rect x="833.8" y="315.8"/><rect x="838.3" y="315.8"/><rect x="841.8" y="315.8"/><rect x="846.3" y="315.8"/><rect x="849.9" y="315.8"/><rect x="825.7" y="320.1"/><rect x="830.2" y="320.1"/><rect x="833.8" y="320.1"/><rect x="838.3" y="320.1"/><rect x="841.8" y="320.1"/>
</g>
<g fill="#06989a">
<rect x="59.7" y="191.4"/><rect x="64.2" y="191.4"/><rect x="67.8" y="191.4"/><rect x="72.3" y="191.4"/><rect x="75.8" y="191.4"/><rect x="80.3" y="191.4"/><rect x="83.9" y="191.4"/><rect x="88.4" y="191.4"/><rect x="92.0" y="191.4"/><rect x="96.5" y="191.4"/><rect x="100.0" y="191.4"/><rect x="104.5" y="191.4"/><rect x="104.5" y="187.2"/><rect x="108.1" y="183.0"/><rect x="108.1" y="178.7"/><rect x="108.1" y="176.2"/><rect x="108.1" y="172.0"/><rect x="112.6" y="167.8"/><rect x="112.6" y="163.5"/><rect x="112.6" y="161.0"/><rect x="112.6" y="156.7"/><rect x="116.2" y="152.5"/><rect x="116.2" y="148.2"/><rect x="120.7" y="145.8"/><rect x="120.7" y="141.5"/><rect x="124.2" y="145.8"/><rect x="124.2" y="137.3"/><rect x="124.2" y="133.0"/><rect x="128.7" y="141.5"/><rect x="128.7" y="130.5"/><rect x="128.7" y="126.3"/><rect x="132.3" y="141.5"/><rect x="132.3" y="126.3"/><rect x="132.3" y="122.1"/><rect x="136.8" y="130.5"/><rect x="136.8" y="133.0"/><rect x="136.8" y="137.3"/><rect x="136.8" y="145.8"/><rect x="140.3" y="141.5"/><rect x="140.3" y="145.8"/><rect x="140.3" y="148.2"/><rect x="140.3" y="152.5"/><rect x="140.3" y="156.7"/><rect x="144.8" y="152.5"/><rect x="144.8" y="156.7"/><rect x="144.8" y="161.0"/><rect x="148.4" y="163.5"/><rect x="148.4" y="167.8"/><rect x="148.4" y="172.0"/><rect x="152.9" y="163.5"/><rect x="152.9" y="167.8"/><rect x="156.5" y="163.5"/><rect x="156.5" y="167.8"/><rect x="161.0" y="161.0"/><rect x="161.0" y="163.5"/><rect x="164.5" y="161.0"/><rect x="169.0" y="161.0"/><rect x="172.6" y="156.7"/><rect x="177.1" y="156.7"/><rect x="180.7" y="161.0"/><rect x="180.7" y="163.5"/><rect x="185.2" y="161.0"/><rect x="185.2" y="167.8"/><rect x="188.7" y="172.0"/><rect x="188.7" y="176.2"/><rect x="193.2" y="178.7"/><rect x="196.8" y="163.5"/><rect x="196.8" y="172.0"/><rect x="196.8" y="176.2"/><rect x="201.3" y="163.5"/><rect x="201.3" y="167.8"/><rect x="204.8" y="156.7"/><rect x="204.8" y="161.0"/><rect x="209.3" y="148.2"/><rect x="209.3" y="152.5"/><rect x="212.9" y="152.5"/><rect x="217.4" y="156.7"/><rect x="217.4" y="161.0"/><rect x="221.0" y="152.5"/><rect x="221.0" y="156.7"/><rect x="225.5" y="148.2"/><rect x="225.5" y="152.5"/><rect x="225.5" y="161.0"/><rect x="229.0" y="156.7"/><rect x="229.0" y="161.0"/><rect x="233.5" y="163.5"/><rect x="233.5" y="167.8"/><rect x="237.1" y="163.5"/><rect x="237.1" y="172.0"/><rect x="237.1" y="176.2"/><rect x="241.6" y="163.5"/><rect x="241.6" y="176.2"/><rect x="245.2" y="167.8"/><rect x="245.2" y="172.0"/><rect x="249.7" y="167.8"/><rect x="249.7" y="172.0"/><rect x="253.2" y="167.8"/><rect x="253.2" y="172.0"/><rect x="257.7" y="163.5"/><rect x="257.7" y="167.8"/><rect x="261.3" y="163.5"/><rect x="261.3" y="167.8"/><rect x="265.8" y="161.0"/><rect x="265.8" y="163.5"/><rect x="269.4" y="161.0"/><rect x="269.4" y="163.5"/><rect x="273.9" y="163.5"/><rect x="277.4" y="163.5"/><rect x="277.4" y="167.8"/><rect x="277.4" y="172.0"/><rect x="281.9" y="163.5"/><rect x="281.9" y="176.2"/><rect x="285.5" y="163.5"/><rect x="285.5" y="178.7"/><rect x="290.0" y="167.8"/><rect x="290.0" y="176.2"/><rect x="293.5" y="167.8"/><rect x="293.5" y="172.0"/><rect x="298.0" y="163.5"/><rect x="298.0" y="172.0"/><rect x="301.6" y="163.5"/><rect x="301.6" y="167.8"/><rect x="306.1" y="161.0"/><rect x="306.1" y="163.5"/><rect x="309.7" y="161.0"/><rect x="314.2" y="156.7"/><rect x="314.2" y="161.0"/><rect x="317.7" y="163.5"/><rect x="322.2" y="163.5"/><rect x="322.2" y="167.8"/><rect x="325.8" y="167.8"/><rect x="325.8" y="172.0"/><rect x="330.3" y="172.0"/><rect x="330.3" y="176.2"/><rect x="333.9" y="172.0"/><rect x="338.4" y="167.8"/><rect x="338.4" y="172.0"/><rect x="341.9" y="163.5"/><rect x="341.9" y="172.0"/><rect x="346.4" y="172.0"/><rect x="350.0" y="172.0"/><rect x="354.5" y="163.5"/><rect x="354.5" y="172.0"/><rect x="358.0" y="163.5"/><rect x="358.0" y="172.0"/><rect x="362.5" y="167.8"/><rect x="362.5" y="172.0"/><rect x="366.1" y="167.8"/><rect x="366.1" y="172.0"/><rect x="370.6" y="167.8"/><rect x="370.6" y="176.2"/><rect x="374.2" y="167.8"/><rect x="378.7" y="167.8"/><rect x="378.7" y="176.2"/><rect x="382.2" y="172.0"/><rect x="386.7" y="172.0"/><rect x="390.3" y="167.8"/><rect x="390.3" y="172.0"/><rect x="394.8" y="163.5"/><rect x="394.8" y="167.8"/><rect x="398.4" y="156.7"/><rect x="398.4" y="161.0"/><rect x="402.9" y="152.5"/><rect x="406.4" y="156.7"/><rect x="410.9" y="161.0"/><rect x="414.5" y="163.5"/><rect x="414.5" y="172.0"/><rect x="419.0" y="167.8"/><rect x="419.0" y="172.0"/><rect x="422.5" y="163.5"/><rect x="422.5" y="167.8"/><rect x="427.0" y="161.0"/><rect x="427.0" y="163.5"/><rect x="430.6" y="156.7"/><rect x="435.1" y="152.5"/><rect x="435.1" y="161.0"/><rect x="438.7" y="156.7"/><rect x="443.2" y="152.5"/><rect x="443.2" y="161.0"/><rect x="446.7" y="163.5"/><rect x="451.2" y="167.8"/><rect x="454.8" y="172.0"/><rect x="459.3" y="172.0"/><rect x="462.9" y="163.5"/><rect x="462.9" y="176.2"/><rect x="467.4" y="176.2"/><rect x="470.9" y="172.0"/><rect x="475.4" y="172.0"/><rect x="479.0" y="172.0"/><rect x="483.5" y="172.0"/><rect x="487.1" y="167.8"/><rect x="491.6" y="167.8"/><rect x="495.1" y="167.8"/><rect x="499.6" y="172.0"/><rect x="503.2" y="163.5"/><rect x="503.2" y="176.2"/><rect x="507.7" y="163.5"/><rect x="507.7" y="176.2"/><rect x="511.2" y="163.5"/><rect x="511.2" y="176.2"/><rect x="511.2" y="178.7"/><rect x="515.7" y="163.5"/><rect x="515.7" y="167.8"/><rect x="515.7" y="172.0"/><rect x="519.3" y="148.2"/><rect x="519.3" y="152.5"/><rect x="519.3" y="156.7"/><rect x="519.3" y="161.0"/><rect x="523.8" y="141.5"/><rect x="523.8" y="145.8"/><rect x="527.4" y="145.8"/><rect x="531.9" y="145.8"/><rect x="535.4" y="148.2"/><rect x="535.4" y="161.0"/><rect x="539.9" y="148.2"/><rect x="543.5" y="152.5"/><rect x="543.5" y="156.7"/><rect x="548.0" y="161.0"/><rect x="551.6" y="163.5"/><rect x="551.6" y="167.8"/><rect x="556.1" y="167.8"/><rect x="556.1" y="172.0"/><rect x="559.6" y="167.8"/><rect x="564.1" y="163.5"/><rect x="564.1" y="167.8"/><rect x="567.7" y="163.5"/><rect x="572.2" y="163.5"/><rect x="575.7" y="163.5"/><rect x="580.2" y="167.8"/><rect x="583.8" y="167.8"/><rect x="588.3" y="172.0"/><rect x="591.9" y="176.2"/><rect x="596.4" y="176.2"/><rect x="599.9" y="178.7"/><rect x="604.4" y="176.2"/><rect x="608.0" y="172.0"/><rect x="612.5" y="172.0"/><rect x="616.1" y="163.5"/><rect x="616.1" y="167.8"/><rect x="620.6" y="163.5"/><rect x="624.1" y="161.0"/><rect x="628.6" y="156.7"/><rect x="628.6" y="161.0"/><rect x="632.2" y="156.7"/><rect x="636.7" y="161.0"/><rect x="640.2" y="163.5"/><rect x="640.2" y="167.8"/><rect x="640.2" y="172.0"/><rect x="644.7" y="167.8"/><rect x="644.7" y="176.2"/><rect x="648.3" y="167.8"/><rect x="648.3" y="172.0"/><rect x="652.8" y="163.5"/><rect x="652.8" y="167.8"/><rect x="656.4" y="163.5"/><rect x="656.4" y="167.8"/><rect x="660.9" y="163.5"/><rect x="664.4" y="161.0"/><rect x="668.9" y="161.0"/><rect x="672.5" y="156.7"/><rect x="672.5" y="161.0"/><rect x="677.0" y="156.7"/><rect x="677.0" y="161.0"/><rect x="680.6" y="152.5"/><rect x="680.6" y="156.7"/><rect x="685.1" y="148.2"/><rect x="688.6" y="137.3"/><rect x="688.6" y="141.5"/><rect x="688.6" y="145.8"/><rect x="693.1" y="133.0"/><rect x="693.1" y="137.3"/><rect x="693.1" y="141.5"/><rect x="696.7" y="126.3"/><rect x="696.7" y="130.5"/><rect x="696.7" y="133.0"/><rect x="701.2" y="117.8"/><rect x="701.2" y="122.1"/><rect x="701.2" y="126.3"/><rect x="704.8" y="115.3"/><rect x="704.8" y="117.8"/><rect x="709.3" y="111.0"/><rect x="712.8" y="102.5"/><rect x="712.8" y="106.8"/><rect x="717.3" y="106.8"/><rect x="720.9" y="102.5"/><rect x="725.4" y="102.5"/><rect x="725.4" y="106.8"/><rect x="725.4" y="111.0"/><rect x="728.9" y="106.8"/><rect x="728.9" y="111.0"/><rect x="728.9" y="115.3"/><rect x="733.4" y="115.3"/><rect x="733.4" y="117.8"/><rect x="733.4" y="122.1"/><rect x="737.0" y="122.1"/><rect x="737.0" y="126.3"/><rect x="741.5" y="130.5"/><rect x="741.5" y="133.0"/><rect x="745.1" y="137.3"/><rect x="745.1" y="141.5"/><rect x="749.6" y="145.8"/><rect x="753.1" y="145.8"/><rect x="753.1" y="148.2"/><rect x="757.6" y="145.8"/><rect x="757.6" y="148.2"/><rect x="761.2" y="148.2"/><rect x="765.7" y="148.2"/><rect x="769.3" y="148.2"/><rect x="769.3" y="152.5"/><rect x="773.8" y="156.7"/><rect x="773.8" y="161.0"/><rect x="777.3" y="161.0"/><rect x="777.3" y="163.5"/><rect x="777.3" y="167.8"/><rect x="781.8" y="163.5"/><rect x="781.8" y="172.0"/><rect x="785.4" y="161.0"/><rect x="789.9" y="156.7"/><rect x="793.4" y="156.7"/><rect x="797.9" y="152.5"/><rect x="801.5" y="156.7"/><rect x="806.0" y="161.0"/><rect x="809.6" y="163.5"/><rect x="814.1" y="163.5"/><rect x="817.6" y="163.5"/><rect x="817.6" y="167.8"/><rect x="822.1" y="163.5"/><rect x="822.1" y="167.8"/><rect x="825.7" y="167.8"/><rect x="830.2" y="163.5"/><rect x="830.2" y="167.8"/><rect x="833.8" y="163.5"/><rect x="833.8" y="167.8"/><rect x="838.3" y="161.0"/><rect x="838.3" y="167.8"/><rect x="841.8" y="161.0"/><rect x="846.3" y="161.0"/><rect x="849.9" y="161.0"/><rect x="854.4" y="161.0"/><rect x="858.0" y="161.0"/><rect x="862.5" y="156.7"/><rect x="866.0" y="152.5"/><rect x="870.5" y="148.2"/><rect x="874.1" y="152.5"/><rect x="874.1" y="156.7"/><rect x="878.6" y="161.0"/><rect x="882.1" y="163.5"/><rect x="882.1" y="167.8"/><rect x="886.6" y="172.0"/><rect x="890.2" y="172.0"/><rect x="894.7" y="167.8"/><rect x="898.3" y="167.8"/><rect x="902.8" y="167.8"/><rect x="906.3" y="167.8"/><rect x="910.8" y="163.5"/><rect x="910.8" y="167.8"/><rect x="914.4" y="167.8"/><rect x="914.4" y="172.0"/><rect x="914.4" y="176.2"/><rect x="918.9" y="167.8"/><rect x="922.5" y="161.0"/><rect x="922.5" y="163.5"/><rect x="922.5" y="176.2"/><rect x="927.0" y="152.5"/><rect x="927.0" y="156.7"/><rect x="927.0" y="172.0"/><rect x="930.5" y="148.2"/><rect x="935.0" y="152.5"/><rect x="938.6" y="156.7"/><rect x="943.1" y="156.7"/><rect x="946.6" y="161.0"/><rect x="951.1" y="161.0"/><rect x="954.7" y="156.7"/><rect x="959.2" y="156.7"/><rect x="962.8" y="156.7"/><rect x="59.7" y="419.9"/><rect x="64.2" y="419.9"/><rect x="67.8" y="419.9"/><rect x="72.3" y="419.9"/><rect x="75.8" y="419.9"/><rect x="80.3" y="419.9"/><rect x="83.9" y="419.9"/><rect x="88.4" y="419.9"/><rect x="88.4" y="391.9"/><rect x="88.4" y="396.2"/><rect x="88.4" y="400.4"/><rect x="88.4" y="404.6"/><rect x="88.4" y="407.1"/><rect x="88.4" y="411.4"/><rect x="88.4" y="415.6"/><rect x="92.0" y="346.2"/><rect x="92.0" y="350.5"/><rect x="92.0" y="354.7"/><rect x="92.0" y="359.0"/><rect x="92.0" y="361.4"/><rect x="92.0" y="365.7"/><rect x="92.0" y="369.9"/><rect x="92.0" y="374.2"/><rect x="92.0" y="376.7"/><rect x="92.0" y="381.0"/><rect x="92.0" y="385.2"/><rect x="92.0" y="389.4"/><rect x="92.0" y="391.9"/><rect x="92.0" y="396.2"/><rect x="92.0" y="400.4"/><rect x="96.5" y="359.0"/><rect x="96.5" y="361.4"/><rect x="96.5" y="365.7"/><rect x="96.5" y="369.9"/><rect x="96.5" y="354.7"/><rect x="100.0" y="354.7"/><rect x="104.5" y="354.7"/><rect x="108.1" y="354.7"/><rect x="112.6" y="354.7"/><rect x="116.2" y="354.7"/><rect x="120.7" y="354.7"/><rect x="124.2" y="354.7"/><rect x="128.7" y="354.7"/><rect x="132.3" y="354.7"/><rect x="136.8" y="354.7"/><rect x="140.3" y="354.7"/><rect x="144.8" y="354.7"/><rect x="148.4" y="354.7"/><rect x="152.9" y="354.7"/><rect x="156.5" y="354.7"/><rect x="161.0" y="354.7"/><rect x="164.5" y="354.7"/><rect x="169.0" y="354.7"/><rect x="172.6" y="354.7"/><rect x="177.1" y="354.7"/><rect x="180.7" y="354.7"/><rect x="185.2" y="354.7"/><rect x="188.7" y="354.7"/><rect x="193.2" y="354.7"/><rect x="196.8" y="354.7"/><rect x="201.3" y="354.7"/><rect x="204.8" y="354.7"/><rect x="209.3" y="354.7"/><rect x="212.9" y="354.7"/><rect x="217.4" y="354.7"/><rect x="221.0" y="354.7"/><rect x="225.5" y="354.7"/><rect x="229.0" y="354.7"/><rect x="233.5" y="354.7"/><rect x="237.1" y="354.7"/><rect x="241.6" y="354.7"/><rect x="245.2" y="354.7"/><rect x="249.7" y="354.7"/><rect x="253.2" y="354.7"/><rect x="257.7" y="354.7"/><rect x="261.3" y="354.7"/><rect x="265.8" y="354.7"/><rect x="269.4" y="354.7"/><rect x="273.9" y="354.7"/><rect x="277.4" y="354.7"/><rect x="281.9" y="354.7"/><rect x="285.5" y="354.7"/><rect x="290.0" y="354.7"/><rect x="293.5" y="354.7"/><rect x="298.0" y="354.7"/><rect x="301.6" y="354.7"/><rect x="306.1" y="354.7"/><rect x="309.7" y="354.7"/><rect x="314.2" y="354.7"/><rect x="317.7" y="354.7"/><rect x="322.2" y="354.7"/><rect x="325.8" y="354.7"/><rect x="330.3" y="354.7"/><rect x="333.9" y="354.7"/><rect x="338.4" y="354.7"/><rect x="341.9" y="354.7"/><rect x="346.4" y="354.7"/><rect x="350.0" y="354.7"/><rect x="354.5" y="354.7"/><rect x="358.0" y="354.7"/><rect x="362.5" y="354.7"/><rect x="366.1" y="354.7"/><rect x="370.6" y="354.7"/><rect x="374.2" y="354.7"/><rect x="378.7" y="354.7"/><rect x="382.2" y="354.7"/><rect x="386.7" y="354.7"/><rect x="390.3" y="354.7"/><rect x="394.8" y="354.7"/><rect x="398.4" y="354.7"/><rect x="402.9" y="354.7"/><rect x="406.4" y="354.7"/><rect x="410.9" y="354.7"/><rect x="414.5" y="354.7"/><rect x="419.0" y="354.7"/><rect x="422.5" y="354.7"/><rect x="427.0" y="354.7"/><rect x="430.6" y="354.7"/><rect x="435.1" y="354.7"/><rect x="438.7" y="354.7"/><rect x="443.2" y="354.7"/><rect x="446.7" y="354.7"/><rect x="451.2" y="354.7"/><rect x="454.8" y="354.7"/><rect x="459.3" y="354.7"/><rect x="462.9" y="354.7"/><rect x="467.4" y="354.7"/><rect x="470.9" y="354.7"/><rect x="475.4" y="354.7"/><rect x="479.0" y="354.7"/><rect x="483.5" y="354.7"/><rect x="487.1" y="354.7"/><rect x="491.6" y="354.7"/><rect x="495.1" y="354.7"/><rect x="499.6" y="354.7"/><rect x="503.2" y="354.7"/><rect x="507.7" y="354.7"/><rect x="511.2" y="354.7"/><rect x="515.7" y="354.7"/><rect x="519.3" y="354.7"/><rect x="523.8" y="354.7"/><rect x="527.4" y="354.7"/><rect x="531.9" y="354.7"/><rect x="535.4" y="354.7"/><rect x="539.9" y="354.7"/><rect x="543.5" y="354.7"/><rect x="548.0" y="354.7"/><rect x="551.6" y="354.7"/><rect x="556.1" y="354.7"/><rect x="559.6" y="354.7"/><rect x="564.1" y="354.7"/><rect x="567.7" y="354.7"/><rect x="572.2" y="354.7"/><rect x="575.7" y="354.7"/><rect x="580.2" y="354.7"/><rect x="583.8" y="354.7"/><rect x="588.3" y="354.7"/><rect x="591.9" y="354.7"/><rect x="596.4" y="354.7"/><rect x="599.9" y="354.7"/><rect x="604.4" y="354.7"/><rect x="608.0" y="354.7"/><rect x="612.5" y="354.7"/><rect x="616.1" y="354.7"/><rect x="620.6" y="354.7"/><rect x="624.1" y="354.7"/><rect x="628.6" y="354.7"/><rect x="833.8" y="376.7"/><rect x="838.3" y="376.7"/><rect x="841.8" y="376.7"/><rect x="846.3" y="376.7"/><rect x="849.9" y="376.7"/><rect x="833.8" y="381.0"/><rect x="838.3" y="381.0"/><rect x="841.8" y="381.0"/><rect x="846.3" y="381.0"/><rect x="849.9" y="381.0"/><rect x="854.4" y="381.0"/><rect x="841.8" y="385.2"/><rect x="846.3" y="385.2"/><rect x="849.9" y="385.2"/><rect x="854.4" y="385.2"/><rect x="858.0" y="385.2"/><rect x="849.9" y="389.4"/><rect x="854.4" y="389.4"/><rect x="858.0" y="389.4"/><rect x="862.5" y="389.4"/><rect x="849.9" y="391.9"/><rect x="854.4" y="391.9"/><rect x="858.0" y="391.9"/><rect x="862.5" y="391.9"/><rect x="854.4" y="396.2"/><rect x="858.0" y="396.2"/><rect x="862.5" y="396.2"/><rect x="854.4" y="400.4"/><rect x="858.0" y="400.4"/><rect x="862.5" y="400.4"/><rect x="854.4" y="404.6"/><rect x="858.0" y="404.6"/><rect x="862.5" y="404.6"/><rect x="849.9" y="407.1"/><rect x="854.4" y="407.1"/><rect x="858.0" y="407.1"/><rect x="862.5" y="407.1"/><rect x="849.9" y="411.4"/><rect x="854.4" y="411.4"/><rect x="858.0" y="411.4"/><rect x="862.5" y="411.4"/><rect x="841.8" y="415.6"/><rect x="846.3" y="415.6"/><rect x="849.9" y="415.6"/><rect x="854.4" y="415.6"/><rect x="858.0" y="415.6"/><rect x="841.8" y="419.9"/><rect x="846.3" y="419.9"/><rect x="849.9" y="419.9"/><rect x="854.4" y="419.9"/><rect x="849.9" y="422.4"/>
</g>
<g fill="#cc0000">
<rect x="245.2" y="605.1"/><rect x="249.7" y="605.1"/><rect x="253.2" y="605.1"/><rect x="257.7" y="605.1"/><rect x="261.3" y="605.1"/><rect x="265.8" y="605.1"/><rect x="245.2" y="609.4"/><rect x="249.7" y="609.4"/><rect x="253.2" y="609.4"/><rect x="257.7" y="609.4"/><rect x="261.3" y="609.4"/><rect x="265.8" y="609.4"/><rect x="269.4" y="609.4"/><rect x="257.7" y="613.6"/><rect x="261.3" y="613.6"/><rect x="265.8" y="613.6"/><rect x="269.4" y="613.6"/><rect x="273.9" y="613.6"/><rect x="265.8" y="617.9"/><rect x="269.4" y="617.9"/><rect x="273.9" y="617.9"/><rect x="277.4" y="617.9"/><rect x="269.4" y="620.3"/><rect x="273.9" y="620.3"/><rect x="277.4" y="620.3"/><rect x="269.4" y="624.6"/><rect x="273.9" y="624.6"/><rect x="277.4" y="624.6"/><rect x="269.4" y="628.8"/><rect x="273.9" y="628.8"/><rect x="277.4" y="628.8"/><rect x="269.4" y="633.1"/><rect x="273.9" y="633.1"/><rect x="277.4" y="633.1"/>
</g>
</svg>
</body></html>
